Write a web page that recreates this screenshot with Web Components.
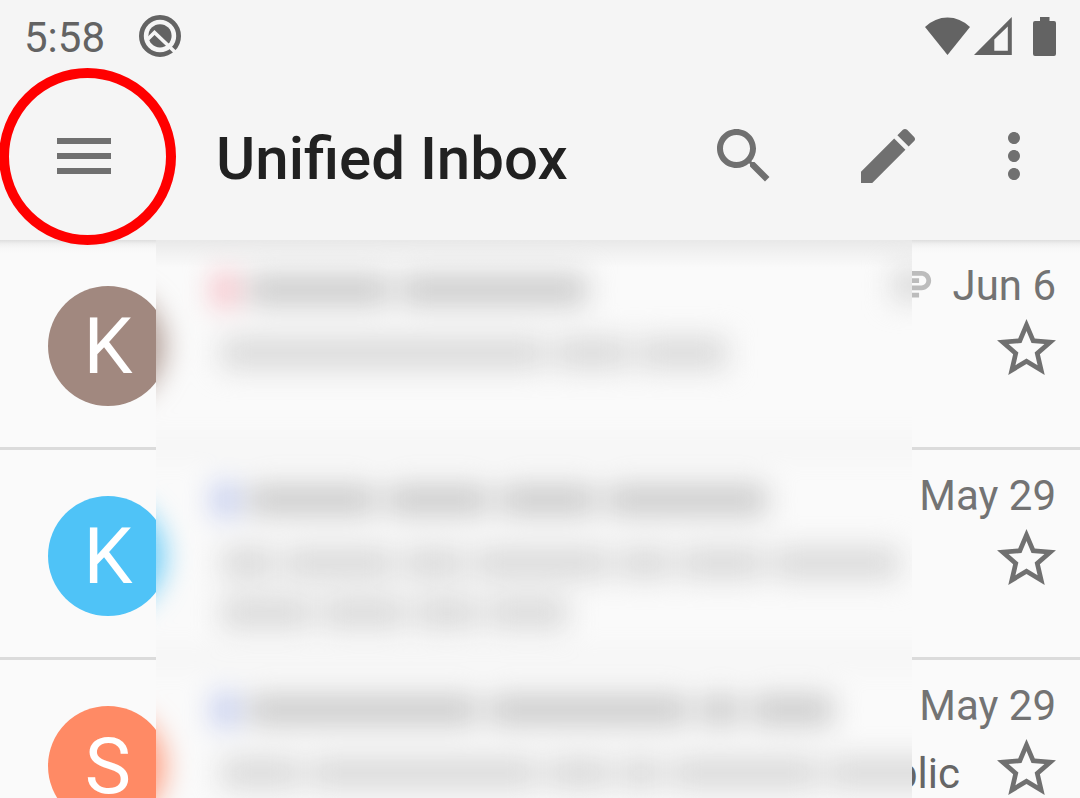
<!DOCTYPE html>
<html lang="en">
<head>
<meta charset="utf-8">
<meta name="viewport" content="width=device-width, initial-scale=1">
<title>Unified Inbox</title>
<style>
  html, body { margin: 0; height: 100%; }
  body { background: #fafafa; font-family: Roboto, "Liberation Sans", sans-serif; overflow: hidden; }
</style>
</head>
<body>
<mail-app></mail-app>

<template id="status-bar">
  <style>
    :host { display: flex; align-items: center; height: 72px; padding: 0 24px; box-sizing: border-box; color: #636363; }
    svg { display: block; fill: currentColor; flex: none; }
    time { font-size: 42px; line-height: 48px; padding-top: 3px; }
    .notice { margin-left: 34px; }
    .system { display: flex; align-items: center; margin-left: auto; gap: 4px; }
    .battery { margin-left: 17px; }
  </style>
  <time>5:58</time>
  <svg class="notice" width="42" height="42" viewBox="0 0 42 42" aria-hidden="true">
    <circle cx="21" cy="21" r="18.600" fill="none" stroke="currentColor" stroke-width="4.800"/>
    <circle cx="21" cy="20.800" r="11.600"/>
    <path fill="none" stroke="#f5f5f5" stroke-width="3.600" d="M9 24L15.500 17.500L36 37"/>
  </svg>
  <div class="system">
    <svg width="45" height="38" viewBox="0 0 45 38" aria-hidden="true"><path d="M0 10Q10 .5 22.500 .5T45 10L22.500 38z"/></svg>
    <svg width="38" height="38" viewBox="0 0 38 38" aria-hidden="true"><path fill-rule="evenodd" d="M0 38L37.800 0V38zM20.300 22.500V33.800H33.800V9.500z"/></svg>
    <svg class="battery" width="23" height="39" viewBox="0 0 23 39" aria-hidden="true"><path d="M7 0H16.500V4H21A2 2 0 0 1 23 6V37A2 2 0 0 1 21 39H2A2 2 0 0 1 0 37V6A2 2 0 0 1 2 4H7z"/></svg>
  </div>
</template>

<template id="icon-button">
  <style>
    :host { display: block; flex: none; }
    button { display: flex; align-items: center; justify-content: center; width: 100%; height: 100%; padding: 0; margin: 0; border: 0; background: none; color: #707070; cursor: pointer; }
    svg { display: block; fill: currentColor; }
  </style>
  <button type="button"><svg aria-hidden="true"><path/></svg></button>
</template>

<template id="app-toolbar">
  <style>
    :host { display: flex; align-items: center; position: relative; height: 168px; padding: 0 12px 0 48px; box-sizing: border-box; }
    h1 { flex: 1; margin: 0 0 0 96px; padding-top: 5px; font-size: 60px; line-height: 72px; font-weight: 500; color: #212121; white-space: nowrap; }
    icon-button { height: 72px; }
    .menu { width: 72px; }
    .action { width: 144px; }
    .more { width: 108px; }
    .highlight { position: absolute; left: -1px; top: -4px; width: 177px; height: 177px; box-sizing: border-box; border: 10px solid #f00; border-radius: 50%; pointer-events: none; }
  </style>
  <icon-button class="menu" icon="menu" size="72" label="Open menu"></icon-button>
  <h1><slot></slot></h1>
  <icon-button class="action" icon="search" size="72" label="Search"></icon-button>
  <icon-button class="action" icon="edit" size="72" label="Compose"></icon-button>
  <icon-button class="more" icon="more" size="72" label="More options"></icon-button>
  <div class="highlight"></div>
</template>

<template id="mail-row">
  <style>
    :host { display: flex; height: 210px; padding: 21px 24px 0 48px; box-sizing: border-box; border-bottom: 3px solid #dbdbdb; }
    .avatar { flex: none; width: 120px; height: 120px; margin: 25px 48px 0 0; border-radius: 50%; background: var(--avatar); color: #fff; font-size: 78px; line-height: 122px; text-align: center; }
    .body { flex: 1; min-width: 0; }
    .line { display: flex; align-items: flex-start; justify-content: flex-end; }
    .clip { display: none; margin: -7px 16px 0 0; fill: #bcbcbc; }
    :host([attachment]) .clip { display: block; }
    .first { height: 58px; }
    time { font-size: 42px; line-height: 50px; color: #737373; white-space: nowrap; }
    .preview { padding: 10px 37px 0 0; font-size: 42px; line-height: 50px; color: #666; }
    icon-button { width: 59px; height: 56px; }
  </style>
  <div class="avatar"></div>
  <div class="body">
    <div class="line first">
      <svg class="clip" width="58" height="58" viewBox="0 0 24 24" aria-hidden="true"><path d="M2 12.500C2 9.460 4.460 7 7.500 7H18c2.210 0 4 1.790 4 4s-1.790 4-4 4H9.500C8.120 15 7 13.880 7 12.500S8.120 10 9.500 10H17v2H9.410c-.55 0-.55 1 0 1H18c1.100 0 2-.9 2-2s-.9-2-2-2H7.500C5.570 9 4 10.570 4 12.500S5.570 16 7.500 16H17v2H7.500C4.460 18 2 15.540 2 12.500z"/></svg>
      <time></time>
    </div>
    <div class="line">
      <div class="preview"><slot></slot></div>
      <icon-button icon="star" size="59" label="Star"></icon-button>
    </div>
  </div>
</template>

<template id="ghost-row">
  <style>
    :host { display: flex; align-items: flex-start; gap: 45px; height: 210px; padding: 25px 0 0 48px; box-sizing: border-box; border-bottom: 3px solid #dbdbdb; }
    .disc { flex: none; width: 116px; height: 116px; margin: 23px 4px 0 0; border-radius: 50%; background: var(--avatar); opacity: .85; }
    .lines { flex: 1; min-width: 0; }
    .line { display: flex; align-items: center; gap: 9px; height: 50px; padding-left: 8px; }
    .line:first-of-type { padding-left: 0; margin-bottom: 13px; gap: 11px; }
    i { display: block; flex: none; height: 32px; background: #dadada; }
    .line:first-of-type i { background: #cdcdcd; }
    .line .label { width: 24px; height: 34px; background: var(--label) !important; }
    .line .clip { display: none; width: 40px; margin: -10px 148px 0 auto; background: #dadada !important; }
    :host([attachment]) .clip { display: block; }
  </style>
  <div class="disc"></div>
  <div class="lines"></div>
</template>

<template id="mail-list">
  <style>
    :host { display: block; position: relative; background: #fafafa linear-gradient(#dedede, #f0f0f0 4px, #f7f7f7 8px, #fafafa 13px) top / 100% 13px no-repeat; }
    .frost { position: absolute; inset: 0 168px 0 156px; overflow: hidden; background: #fafafa; pointer-events: none; }
    .haze { margin: 0 -168px 0 -156px; filter: blur(14px); }
    .shade { position: absolute; inset: 0 0 auto 0; height: 28px; background: linear-gradient(rgba(0,0,0,.07), rgba(0,0,0,.03) 14px, rgba(0,0,0,0)); }
  </style>
  <slot></slot>
  <div class="frost" aria-hidden="true">
    <div class="haze"><slot name="frosted"></slot></div>
    <div class="shade"></div>
  </div>
</template>

<template id="mail-app">
  <style>
    :host { display: block; height: 100vh; overflow: hidden; }
    header { position: relative; z-index: 1; background: #f5f5f5; }
    .brown { --avatar: #a1887f; --label: #f7bcc4; }
    .blue { --avatar: #4fc3f7; --label: #bec8ee; }
    .coral { --avatar: #ff8a65; --label: #bec8ee; }
  </style>
  <header>
    <status-bar></status-bar>
    <app-toolbar>Unified Inbox</app-toolbar>
  </header>
  <mail-list>
    <mail-row class="brown" initial="K" date="Jun 6" attachment></mail-row>
    <mail-row class="blue" initial="K" date="May 29"></mail-row>
    <mail-row class="coral" initial="S" date="May 29">Public</mail-row>
    <ghost-row class="brown" slot="frosted" attachment lines="142 186|324 76 88"></ghost-row>
    <ghost-row class="blue" slot="frosted" lines="128 102 96 160|54 110 62 136 52 84 126|92 84 64 80"></ghost-row>
    <ghost-row class="coral" slot="frosted" lines="230 200 40 82|80 228 64 42 148 120"></ghost-row>
  </mail-list>
</template>

<script>
  const ICONS = {
    menu: ['0 0 24 24', 'M3 18h18v-2H3v2zm0-5h18v-2H3v2zm0-7v2h18V6H3z'],
    search: ['0 0 24 24', 'M15.500 14h-.79l-.28-.27C15.410 12.590 16 11.110 16 9.500 16 5.910 13.090 3 9.500 3S3 5.910 3 9.500 5.910 16 9.500 16c1.610 0 3.090-.59 4.230-1.570l.27.28v.79l5 4.990L20.490 19l-4.990-5zm-6 0C7.010 14 5 11.990 5 9.500S7.010 5 9.500 5 14 7.010 14 9.500 11.990 14 9.500 14z'],
    edit: ['0 0 24 24', 'M3 17.250V21h3.750L17.810 9.940l-3.750-3.750L3 17.250zM20.710 7.040c.39-.39.39-1.020 0-1.410l-2.340-2.340c-.39-.39-1.020-.39-1.410 0l-1.830 1.830 3.750 3.750 1.830-1.830z'],
    more: ['0 0 24 24', 'M12 8c1.100 0 2-.9 2-2s-.9-2-2-2-2 .9-2 2 .9 2 2 2zm0 2c-1.100 0-2 .9-2 2s.9 2 2 2 2-.9 2-2-.9-2-2-2zm0 6c-1.100 0-2 .9-2 2s.9 2 2 2 2-.9 2-2-.9-2-2-2z'],
    star: ['2 2 20 19', 'M22 9.240l-7.190-.62L12 2 9.190 8.630 2 9.240l5.460 4.730L5.820 21 12 17.270 18.180 21l-1.630-7.030L22 9.240zM12 15.400l-3.760 2.270 1-4.280-3.320-2.880 4.380-.38L12 6.100l1.710 4.040 4.380.38-3.320 2.880 1 4.280L12 15.400z']
  };

  class Base extends HTMLElement {
    constructor() {
      super();
      const tpl = document.getElementById(this.localName);
      this.attachShadow({ mode: 'open' }).append(tpl.content.cloneNode(true));
    }
    $(selector) { return this.shadowRoot.querySelector(selector); }
  }

  customElements.define('icon-button', class extends Base {
    connectedCallback() {
      const [box, path] = ICONS[this.getAttribute('icon')];
      const [, , w, h] = box.split(' ').map(Number);
      const size = Number(this.getAttribute('size'));
      const svg = this.$('svg');
      svg.setAttribute('viewBox', box);
      svg.setAttribute('width', size);
      svg.setAttribute('height', Math.round(size * h / w));
      this.$('path').setAttribute('d', path);
      this.$('button').setAttribute('aria-label', this.getAttribute('label'));
    }
  });

  // Hidden message text: each line is a list of word widths.
  customElements.define('ghost-row', class extends Base {
    connectedCallback() {
      const block = (line, name) => {
        const i = document.createElement('i');
        i.className = name;
        line.append(i);
        return i;
      };
      this.getAttribute('lines').split('|').forEach((widths, index) => {
        const line = document.createElement('div');
        line.className = 'line';
        if (index === 0) block(line, 'label');
        for (const width of widths.split(' ')) block(line, 'word').style.width = width + 'px';
        if (index === 0) block(line, 'clip');
        this.$('.lines').append(line);
      });
    }
  });

  customElements.define('mail-row', class extends Base {
    connectedCallback() {
      this.$('.avatar').textContent = this.getAttribute('initial');
      this.$('time').textContent = this.getAttribute('date');
    }
  });

  customElements.define('status-bar', class extends Base {});
  customElements.define('app-toolbar', class extends Base {});
  customElements.define('mail-list', class extends Base {});
  customElements.define('mail-app', class extends Base {});
</script>
</body>
</html>
